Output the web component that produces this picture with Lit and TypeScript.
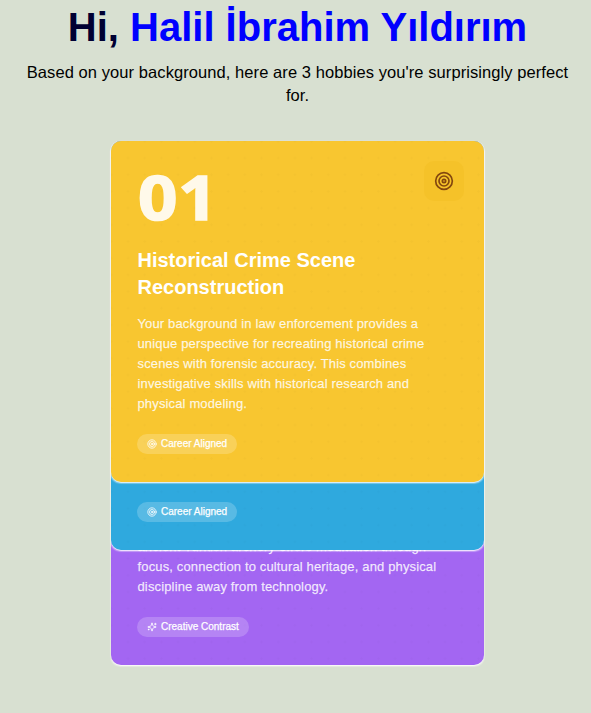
import { LitElement, html, css, svg } from "lit";
import { customElement, property } from "lit/decorators.js";

const target = svg`<circle cx="12" cy="12" r="10"/><circle cx="12" cy="12" r="6"/><circle cx="12" cy="12" r="2"/>`;
const sparkles = svg`<path d="M9.94 15.5A2 2 0 0 0 8.5 14.06l-6.14-1.58a.5.5 0 0 1 0-.96L8.5 9.94A2 2 0 0 0 9.94 8.5l1.58-6.14a.5.5 0 0 1 .96 0L14.06 8.5A2 2 0 0 0 15.5 9.94l6.14 1.58a.5.5 0 0 1 0 .96L15.5 14.06a2 2 0 0 0-1.44 1.44l-1.58 6.14a.5.5 0 0 1-.96 0z"/><path d="M20 3v4M22 5h-4M4 17v2M5 18H3"/>`;

interface Hobby {
  number: string;
  title: string;
  lines: string[];
  tag: string;
  tone: string;
}

const hobbies: Hobby[] = [
  {
    number: "01",
    title: "Historical Crime Scene Reconstruction",
    lines: [
      "Your background in law enforcement provides a",
      "unique perspective for recreating historical crime",
      "scenes with forensic accuracy. This combines",
      "investigative skills with historical research and",
      "physical modeling.",
    ],
    tag: "Career Aligned",
    tone: "amber",
  },
  { number: "", title: "", lines: [], tag: "Career Aligned", tone: "blue" },
  {
    number: "",
    title: "",
    lines: [
      "ancient Turkish archery offers meditation through",
      "focus, connection to cultural heritage, and physical",
      "discipline away from technology.",
    ],
    tag: "Creative Contrast",
    tone: "violet",
  },
];

@customElement("hobby-card")
export class HobbyCard extends LitElement {
  @property({ attribute: false }) hobby!: Hobby;

  static styles = css`
    :host { display: block; }
    .card {
      box-sizing: border-box;
      height: 100%;
      display: flex;
      flex-direction: column;
      justify-content: flex-end;
      align-items: flex-start;
      padding: 25px 20px 28px 26.5px;
      border-radius: 10px;
      color: #fff;
      background-image: radial-gradient(circle, rgba(0, 0, 0, 0.015) 1px, transparent 1.3px);
      background-size: 16.7px 16.7px;
      background-position: 8.7px 8.7px;
      box-shadow: 0 1px 1px rgba(255, 255, 255, 0.8), 0 1px 1px 0.5px rgba(255, 255, 255, 0.3);
    }
    .amber { background-color: #f8c630; }
    .blue { background-color: #2fa9de; }
    .violet { background-color: #a366f2; }
    .top { display: flex; justify-content: space-between; width: 100%; height: 80px; }
    .number {
      margin-top: -2px;
      font: 700 60px/64px "Open Sans", sans-serif;
      letter-spacing: 0.5px;
      color: #fff9ea;
      -webkit-text-stroke: 1.5px #fff9ea;
      transform: scaleX(1.15);
      transform-origin: left;
    }
    .icon {
      display: grid;
      place-items: center;
      width: 40px;
      height: 40px;
      margin-top: -6px;
      border-radius: 10px;
      background: #f5c229;
      color: #83470f;
    }
    .title { margin: 0 0 13px; width: 260px; font-size: 20px; line-height: 27px; font-weight: 700; }
    .text {
      font-size: 13px;
      line-height: 20px;
      white-space: nowrap;
      color: rgba(255, 255, 255, 0.84);
      letter-spacing: 0.145px;
      -webkit-text-stroke: 0.25px rgba(255, 255, 255, 0.7);
    }
    .tag {
      display: flex;
      align-items: center;
      gap: 4px;
      height: 20px;
      margin-top: 20px;
      margin-left: -0.5px;
      padding: 0 10px;
      border-radius: 10px;
      background: rgba(255, 255, 255, 0.2);
      font-size: 10px;
      line-height: 18px;
      white-space: nowrap;
    }
    .tag span { padding-bottom: 1px; -webkit-text-stroke: 0.25px #fff; }
    svg { display: block; fill: none; stroke: currentColor; stroke-width: 2; stroke-linecap: round; stroke-linejoin: round; }
  `;

  render() {
    const h = this.hobby;
    const glyph = h.tone === "violet" ? sparkles : target;
    return html`<article class="card ${h.tone}">
      ${h.number
        ? html`<div class="top">
            <div class="number">${h.number}</div>
            <div class="icon"><svg width="20" height="20" viewBox="0 0 24 24">${target}</svg></div>
          </div>`
        : ""}
      ${h.title ? html`<h2 class="title">${h.title}</h2>` : ""}
      ${h.lines.map((line) => html`<div class="text">${line}</div>`)}
      <div class="tag"><svg width="10" height="10" viewBox="0 0 24 24">${glyph}</svg><span>${h.tag}</span></div>
    </article>`;
  }
}

@customElement("app-root")
export class AppRoot extends LitElement {
  static styles = css`
    :host {
      display: block;
      box-sizing: border-box;
      height: 713px;
      overflow: hidden;
      background: #d8e0d1;
      font-family: "Liberation Sans", Arial, sans-serif;
    }
    .heading { margin: 0; padding: 3px 0 0 4px; text-align: center; font-size: 40px; line-height: 48px; font-weight: 700; color: #000033; }
    .name { color: #0000ff; }
    .intro { margin: 10px auto 0; padding-left: 4px; width: 552px; text-align: center; font-size: 16.5px; letter-spacing: 0.075px; line-height: 23px; color: #000; }
    .stack { display: grid; grid-template-rows: 341px 68px 115px; width: 373px; margin: 34px 0 0 111px; }
    .layer { grid-column: 1; }
    .layer:nth-child(1) { grid-row: 1; z-index: 3; }
    .layer:nth-child(2) { grid-row: 1 / 3; z-index: 2; }
    .layer:nth-child(3) { grid-row: 1 / 4; z-index: 1; }
  `;

  render() {
    return html`
      <h1 class="heading">Hi, <span class="name">Halil İbrahim Yıldırım</span></h1>
      <p class="intro">Based on your background, here are 3 hobbies you're surprisingly perfect for.</p>
      <main class="stack">
        ${hobbies.map((h) => html`<hobby-card class="layer" .hobby=${h}></hobby-card>`)}
      </main>
    `;
  }
}
